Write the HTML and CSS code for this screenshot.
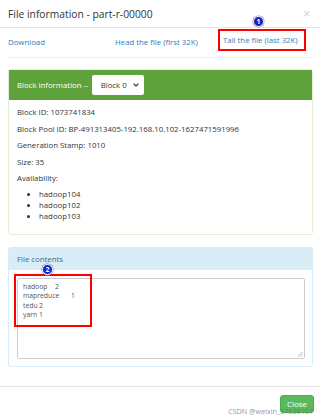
FILE: index.html
```html
<!DOCTYPE html>
<html lang="en">
<head>
    <meta charset="UTF-8">
    <meta name="viewport" content="width=device-width, initial-scale=1.0">
    <title>File information</title>
    <link rel="stylesheet" href="styles.css">
</head>
<body>

    <div class="modal">
        <div class="modal-header">
            <h4 class="modal-title">File information - part-r-00000</h4>
            <span class="close">&times;</span>
        </div>

        <div class="modal-body">
            <div class="links">
                <a href="#" class="link-download">Download</a>
                <a href="#" class="link-head">Head the file (first 32K)</a>
                <a href="#" class="link-tail">Tail the file (last 32K)
                    <span class="badge badge-1">1</span>
                </a>
            </div>
            <hr class="divider">

            <div class="panel panel-success">
                <div class="panel-heading">
                    <span>Block information --</span>
                    <div class="select">Block 0
                        <svg class="caret" width="6" height="4" viewBox="0 0 6 4"><path d="M0.6 0.6 L3 3 L5.4 0.6" fill="none" stroke="#333" stroke-width="1.2"/></svg>
                    </div>
                </div>
                <div class="panel-body">
                    <p>Block ID: 1073741834</p>
                    <p>Block Pool ID: BP-491313405-192.168.10.102-1627471591996</p>
                    <p>Generation Stamp: 1010</p>
                    <p>Size: 35</p>
                    <p>Availability:</p>
                    <ul>
                        <li>hadoop104</li>
                        <li>hadoop102</li>
                        <li>hadoop103</li>
                    </ul>
                </div>
            </div>

            <div class="panel panel-info">
                <div class="panel-heading">File contents</div>
                <div class="panel-body">
                    <div class="textarea">
                        <div class="contents">
                            <span class="badge badge-2">2</span>
                            <pre>hadoop	2
mapreduce	1
tedu	2
yarn	1</pre>
                        </div>
                        <svg class="grip" width="6" height="6" viewBox="0 0 6 6"><path d="M5.5 1 L1 5.5 M5.5 3.5 L3.5 5.5" stroke="#999" stroke-width="0.7"/></svg>
                    </div>
                </div>
            </div>
        </div>

        <div class="modal-footer">
            <span class="watermark">CSDN @weixin_37636107</span>
            <button class="btn-close">Close</button>
        </div>
    </div>

</body>
</html>
```

FILE: styles.css
```css
/* Global */
* {
    margin: 0;
    padding: 0;
    box-sizing: border-box;
}

body {
    font-family: "Open Sans", "Noto Sans", sans-serif;
    background: #fff;
    color: #333;
    width: 320px;
    height: 416px;
    overflow: hidden;
}

.modal {
    width: 320px;
}

/* Header */
.modal-header {
    height: 28px;
    padding: 0 8px;
    display: flex;
    align-items: center;
    justify-content: space-between;
    border-bottom: 1px solid #e5e5e5;
}

.modal-title {
    font-size: 10.3px;
    font-weight: normal;
    color: #333;
}

.close {
    font-size: 12px;
    color: #ccc;
    margin-right: 2px;
}

/* Body */
.modal-body {
    padding: 0 7px 0 8px;
}

.links {
    display: flex;
    align-items: flex-start;
    height: 28px;
    font-size: 7.8px;
}

.links a {
    color: #337ab7;
    text-decoration: none;
}

.link-download,
.link-head {
    line-height: 28px;
}

.link-download {
    width: 107px;
}

.link-head {
    width: 103px;
}

.link-tail {
    position: relative;
    display: flex;
    align-items: center;
    width: 88px;
    height: 22px;
    margin-top: 1px;
    padding-left: 3px;
    border: 2px solid #f00;
    white-space: nowrap;
}

.badge {
    position: absolute;
    width: 11px;
    height: 11px;
    border-radius: 50%;
    background: #1420c8;
    border: 1px solid #fff;
    box-shadow: 0 0 0 0.5px #889;
    color: #fff;
    font-size: 7px;
    font-weight: bold;
    line-height: 9px;
    text-align: center;
}

.badge-1 {
    left: 33px;
    top: -15px;
}

.divider {
    border: none;
    border-top: 1px solid #eee;
    margin-top: 1px;
    margin-bottom: 11px;
}

/* Panels */
.panel {
    border: 1px solid;
    border-radius: 3px;
    margin-bottom: 12px;
}

.panel-success {
    border-color: #dff0d8;
}

.panel-info {
    border-color: #d6ecf6;
    margin-bottom: 0;
}

.panel-heading {
    height: 30px;
    display: flex;
    align-items: center;
    padding: 0 8px;
    font-size: 7.8px;
}

.panel-success .panel-heading {
    background: #5da23a;
    color: #fff;
}

.panel-info .panel-heading {
    background: #d9edf7;
    color: #31708f;
    height: 22px;
}

.select {
    display: flex;
    align-items: center;
    gap: 6px;
    margin-left: 3px;
    height: 20px;
    padding: 0 5px 0 9px;
    background: #fff;
    border-radius: 2px;
    color: #333;
}

.panel-body {
    padding: 7px 8px 12px 8px;
    font-size: 7.8px;
}

.panel-body p {
    line-height: 11px;
    margin-bottom: 5.5px;
}

.panel-body ul {
    padding-left: 22px;
    line-height: 11px;
    margin-top: -0.5px;
}

/* File contents */
.panel-info .panel-body {
    padding: 8px 7px 7px 8px;
}

.textarea {
    position: relative;
    height: 81px;
    border: 1px solid #ccc;
    border-radius: 2px;
}

.contents {
    position: absolute;
    left: -4px;
    top: -5px;
    width: 78px;
    height: 53px;
    border: 2px solid #f00;
}

.badge-2 {
    left: 26px;
    top: -12px;
}

.contents pre {
    font-family: "Open Sans", "Noto Sans", sans-serif;
    font-size: 6.8px;
    line-height: 9.3px;
    color: #555;
    tab-size: 16px;
    padding: 6px 0 0 7px;
}

.grip {
    position: absolute;
    right: 1px;
    bottom: 1px;
}

/* Footer */
.modal-footer {
    position: relative;
    border-top: 1px solid #e5e5e5;
    margin-top: 19px;
    height: 34px;
    display: flex;
    justify-content: flex-end;
    align-items: center;
    padding-right: 6px;
}

.btn-close {
    background: #5cb85c;
    color: #fff;
    border: 1px solid #4cae4c;
    border-radius: 3px;
    font-family: "Open Sans", "Noto Sans", sans-serif;
    font-size: 8px;
    width: 34px;
    height: 18px;
}

.watermark {
    position: absolute;
    right: 7px;
    bottom: 4px;
    font-size: 7.2px;
    color: rgba(110, 110, 110, 0.75);
    z-index: 1;
    pointer-events: none;
}
```
